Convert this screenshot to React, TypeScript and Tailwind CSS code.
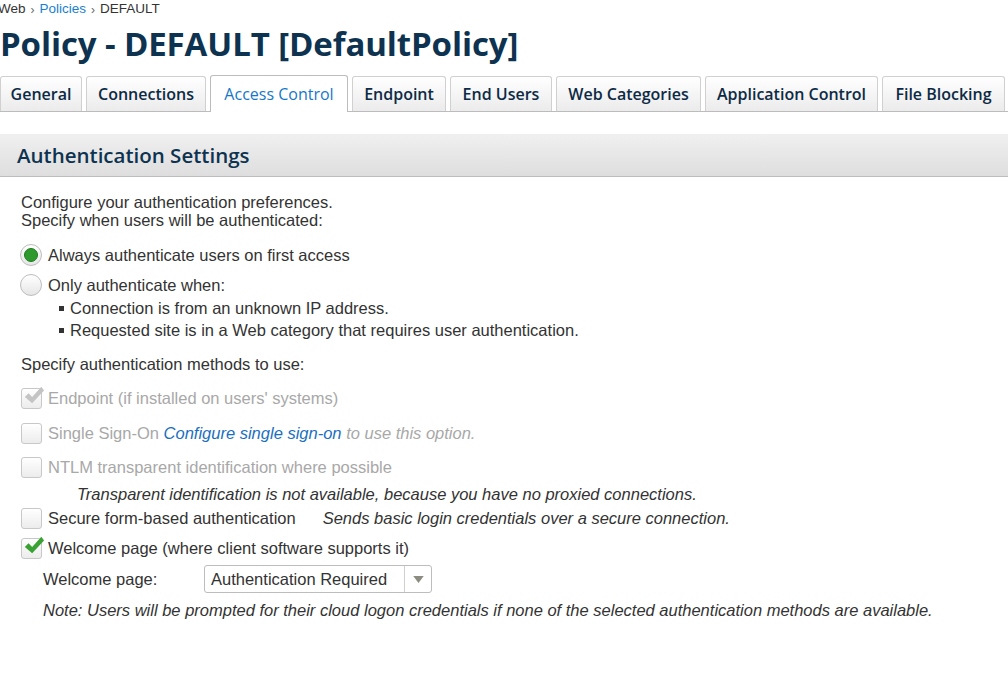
import React from 'react'

const heading = { fontFamily: '"Open Sans", "DejaVu Sans", sans-serif' }

const tabs = [
    { label: 'General', w: 'w-[82px]' },
    { label: 'Connections', w: 'w-[120px]' },
    { label: 'Access Control', w: 'w-[138px]' },
    { label: 'Endpoint', w: 'w-[94px]' },
    { label: 'End Users', w: 'w-[102px]' },
    { label: 'Web Categories', w: 'w-[145px]' },
    { label: 'Application Control', w: 'w-[173px]' },
    { label: 'File Blocking', w: 'w-[123px]' },
]

function Radio({ checked }: { checked?: boolean }) {
    return (
        <span className="w-[22px] h-[22px] rounded-full border border-[#bdbdbd] bg-gradient-to-b from-white to-[#e6e6e6] flex items-center justify-center shrink-0">
            {checked && <span className="w-[14px] h-[14px] rounded-full bg-[#2e9a2e] border border-[#1f7a1f]" />}
        </span>
    )
}

function Check({ checked, disabled }: { checked?: boolean; disabled?: boolean }) {
    return (
        <span className="relative w-[21px] h-[21px] rounded-[3px] border border-[#c8c8c8] bg-gradient-to-b from-white to-[#ececec] shrink-0">
            {checked && (
                <svg viewBox="0 0 24 24" className="absolute left-[1px] -top-[4px] w-[22px] h-[22px]">
                    <path d="M2 13 L6 9 L10 13 L20 2 L23 6 L10 20 Z" fill={disabled ? '#c4c4c4' : '#3aa233'} />
                </svg>
            )}
        </span>
    )
}

export default function App() {
    return (
        <div className="w-[1008px] h-[699px] bg-white overflow-hidden text-[16.5px] text-[#333]" style={{ fontFamily: '"Liberation Sans", Arial, sans-serif' }}>
            {/* Breadcrumb */}
            <div className="ml-[-2px] h-[19px] flex items-center gap-[5px] text-[13.5px] text-[#333]">
                <span>Web</span>
                <span className="text-[#666] text-[12px]">›</span>
                <span className="text-[#1a7fd0]">Policies</span>
                <span className="text-[#666] text-[12px]">›</span>
                <span>DEFAULT</span>
            </div>

            {/* Title */}
            <h1 className="mt-[4px] h-[40px] flex items-center text-[33px] font-bold text-[#0d3350] leading-none tracking-[-0.1px] whitespace-nowrap" style={heading}>
                Policy - DEFAULT [DefaultPolicy]
            </h1>

            {/* Tabs */}
            <div className="mt-[13px] flex items-end gap-[4px] border-b border-[#bcbcbc] h-[36px] whitespace-nowrap" style={heading}>
                {tabs.map((t) =>
                    t.label === 'Access Control' ? (
                        <div key={t.label} className={`${t.w} shrink-0 h-[37px] -mb-px flex items-center justify-center rounded-t-[3px] border border-b-0 border-[#bcbcbc] bg-white text-[#1677c9] text-[16px] font-medium`}>
                            {t.label}
                        </div>
                    ) : (
                        <div key={t.label} className={`${t.w} shrink-0 h-[35px] flex items-center justify-center rounded-t-[3px] border border-b-0 border-[#d0d0d0] bg-gradient-to-b from-white to-[#ebebeb] text-[#0d2a45] text-[16px] font-semibold`}>
                            {t.label}
                        </div>
                    )
                )}
            </div>

            {/* Section header */}
            <div className="mt-[22px] h-[43px] flex items-center pl-[17px] bg-gradient-to-b from-[#f0f0f0] to-[#dedede] border-b border-[#bdbdbd] text-[20.5px] font-semibold text-[#0d3350]" style={heading}>
                Authentication Settings
            </div>

            {/* Content */}
            <div className="pl-[21px] pt-[16px] leading-[18px]">
                <p>Configure your authentication preferences.</p>
                <p>Specify when users will be authenticated:</p>

                <div className="mt-[14px] -ml-[1px] flex items-center gap-[6px] h-[24px]">
                    <Radio checked />
                    <span>Always authenticate users on first access</span>
                </div>
                <div className="mt-[6px] -ml-[1px] flex items-center gap-[6px] h-[24px]">
                    <Radio />
                    <span>Only authenticate when:</span>
                </div>
                <ul className="mt-[2px] pl-[38px] flex flex-col gap-[4px]">
                    <li className="flex items-center gap-[6px]"><span className="w-[5px] h-[5px] bg-[#333]" />Connection is from an unknown IP address.</li>
                    <li className="flex items-center gap-[6px]"><span className="w-[5px] h-[5px] bg-[#333]" />Requested site is in a Web category that requires user authentication.</li>
                </ul>

                <p className="mt-[16px]">Specify authentication methods to use:</p>

                <div className="mt-[14px] flex items-center gap-[6px] h-[22px] text-[#a8a8a8]">
                    <Check checked disabled />
                    <span>Endpoint (if installed on users' systems)</span>
                </div>
                <div className="mt-[13px] flex items-center gap-[6px] h-[22px] text-[#a8a8a8]">
                    <Check disabled />
                    <span>Single Sign-On <i className="text-[#1a6fc0]">Configure single sign-on</i> <i>to use this option.</i></span>
                </div>
                <div className="mt-[12px] flex items-center gap-[6px] h-[22px] text-[#a8a8a8]">
                    <Check disabled />
                    <span>NTLM transparent identification where possible</span>
                </div>
                <p className="mt-[7px] pl-[56px] italic">Transparent identification is not available, because you have no proxied connections.</p>
                <div className="mt-[4px] flex items-center gap-[6px] h-[22px]">
                    <Check />
                    <span>Secure form-based authentication</span>
                    <i className="ml-[21px]">Sends basic login credentials over a secure connection.</i>
                </div>
                <div className="mt-[8px] flex items-center gap-[6px] h-[22px]">
                    <Check checked />
                    <span>Welcome page (where client software supports it)</span>
                </div>

                <div className="mt-[6px] pl-[22px] flex items-center h-[28px]">
                    <span className="w-[161px]">Welcome page:</span>
                    <div className="w-[228px] h-[28px] flex items-center rounded-[3px] border border-[#bdbdbd] bg-white">
                        <span className="flex-1 pl-[6px] text-[#333]">Authentication Required</span>
                        <span className="w-[27px] h-full border-l border-[#d0d0d0] flex items-center justify-center">
                            <svg viewBox="0 0 12 8" className="w-[11px] h-[7px]"><path d="M0 0 H12 L6 8 Z" fill="#8c8c80" /></svg>
                        </span>
                    </div>
                </div>
                <p className="mt-[8px] pl-[22px] italic">Note: Users will be prompted for their cloud logon credentials if none of the selected authentication methods are available.</p>
            </div>
        </div>
    )
}
